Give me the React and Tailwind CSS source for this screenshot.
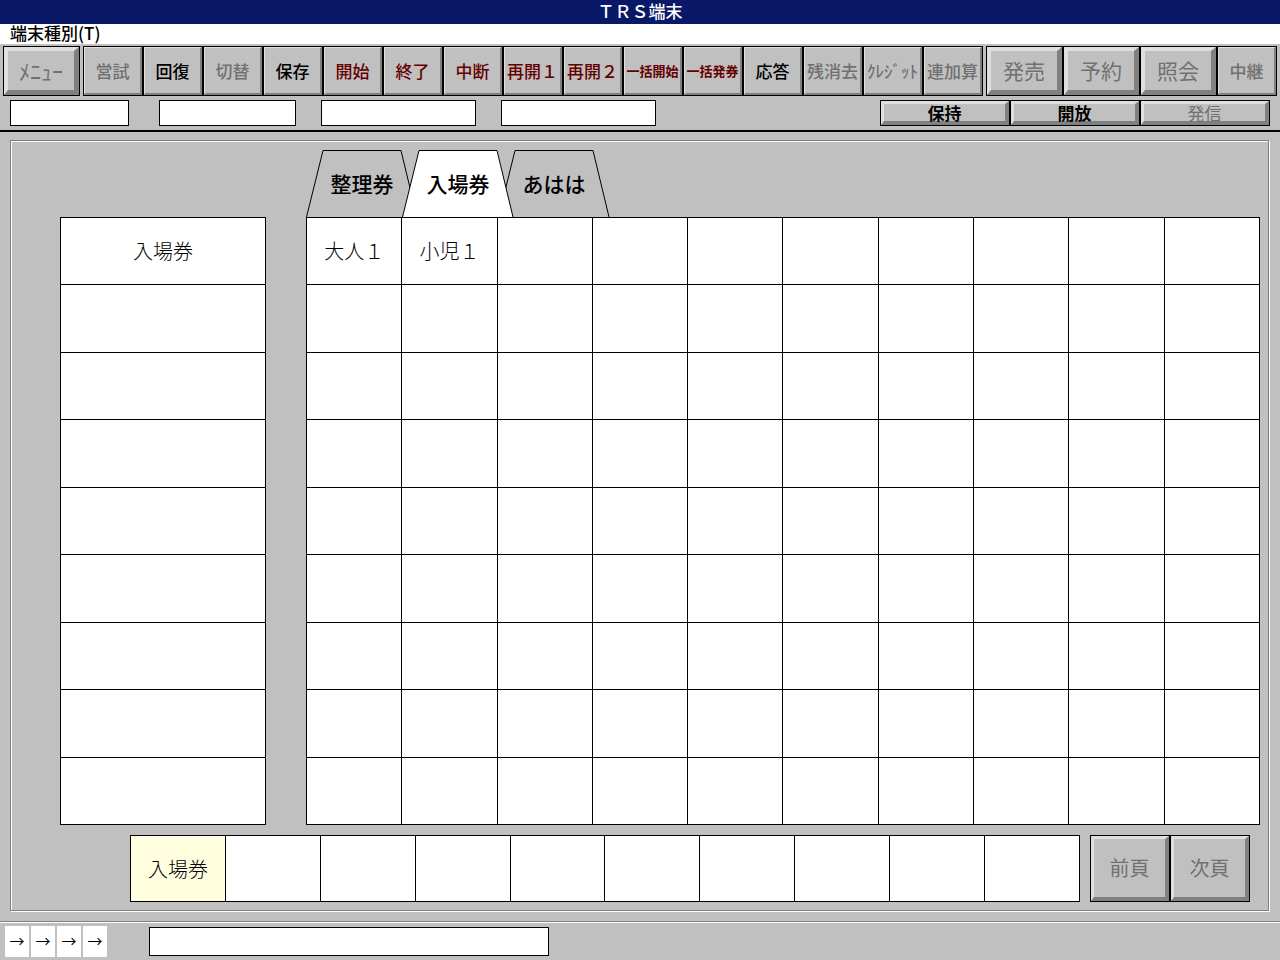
import React from "react";

const GRAY = "text-[#707070]";
const RED = "text-[#640000]";
const BLACK = "text-black";

const tools = [
  { label: "営試", tone: GRAY, disabled: true },
  { label: "回復", tone: BLACK },
  { label: "切替", tone: GRAY, disabled: true },
  { label: "保存", tone: BLACK },
  { label: "開始", tone: RED },
  { label: "終了", tone: RED },
  { label: "中断", tone: RED },
  { label: "再開１", tone: RED },
  { label: "再開２", tone: RED },
  { label: "一括開始", tone: RED, size: "text-[13px] font-bold" },
  { label: "一括発券", tone: RED, size: "text-[13px] font-bold" },
  { label: "応答", tone: BLACK },
  { label: "残消去", tone: GRAY, disabled: true },
  { label: "ｸﾚｼﾞｯﾄ", tone: GRAY, disabled: true },
  { label: "連加算", tone: GRAY, disabled: true },
];

const COLUMNS = 10;
const ROWS = 9;
const cells = [["大人１", "小児１"]];
const tabs = ["整理券", "入場券", "あはは"];

function FlatButton({ label, tone, size = "text-[17px] font-medium", disabled }) {
  return (
    <button
      type="button"
      disabled={disabled}
      className="h-[50px] w-[60px] shrink-0 border border-black bg-[#c0c0c0]"
    >
      <span
        className={`flex h-full items-center justify-center whitespace-nowrap border-t border-l border-r-2 border-b-2 border-t-[#dfdfdf] border-l-[#dfdfdf] border-r-[#808080] border-b-[#808080] ${size} ${tone}`}
      >
        <span className="-mx-2">{label}</span>
      </span>
    </button>
  );
}

function RaisedButton({ label, frame, face = "border-t-4 border-l-4 border-r-[5px] border-b-[5px]", text, disabled }) {
  return (
    <button
      type="button"
      disabled={disabled}
      className={`shrink-0 border border-black bg-[#c0c0c0] ${frame}`}
    >
      <span
        className={`flex h-full items-center justify-center whitespace-nowrap border-t-[#dfdfdf] border-l-[#dfdfdf] border-r-[#808080] border-b-[#808080] ${face} ${text}`}
      >
        {label}
      </span>
    </button>
  );
}

function Field({ label, className }) {
  return (
    <input
      type="text"
      aria-label={label}
      className={`border border-black bg-white px-1 text-[17px] outline-none ${className}`}
    />
  );
}

function Tab({ label, active }) {
  return (
    <button
      type="button"
      role="tab"
      aria-selected={active}
      className={`relative -mr-4 h-[67px] w-28 shrink-0 text-[21px] font-medium ${active ? "z-10" : ""}`}
    >
      <svg
        aria-hidden="true"
        viewBox="0 0 112 67"
        className="absolute inset-0 h-full w-full"
      >
        <path
          d="M0.5 67 L17 0.5 H95 L111 67"
          fill={active ? "#ffffff" : "#c0c0c0"}
          stroke="#000000"
          strokeWidth="1"
        />
      </svg>
      <span className="relative">{label}</span>
    </button>
  );
}

const cellClass = "border border-black p-0 text-center";

export default function App() {
  return (
    <div
      className="flex min-h-screen flex-col bg-[#c0c0c0] text-black"
      style={{ fontFamily: '"Noto Sans CJK JP", "Liberation Sans", sans-serif' }}
    >
      <header className="h-6 bg-[#0a1868] text-center text-white">
        <h1 className="text-[17px] leading-[22px] font-medium">ＴＲＳ端末</h1>
      </header>
      <nav className="flex h-5 items-start bg-white px-[10px]">
        <button type="button" className="text-[17px] leading-[18px] font-medium">
          端末種別(T)
        </button>
      </nav>

      <div className="flex px-[3px] pt-[2px]">
        <RaisedButton label="ﾒﾆｭｰ" frame="mr-[3px] h-[50px] w-[77px]" text="text-[22px] text-[#707070]" disabled />
        {tools.map((t) => (
          <FlatButton key={t.label} {...t} />
        ))}
        <div className="ml-auto flex">
          {["発売", "予約", "照会"].map((label) => (
            <RaisedButton key={label} label={label} frame="h-[50px] w-[77px]" text="text-[21px] text-[#707070]" disabled />
          ))}
          <FlatButton label="中継" tone={GRAY} disabled />
        </div>
      </div>

      <div className="flex h-9 border-b-2 border-black px-[10px] pt-1">
        <Field label="入力欄1" className="h-[26px] w-[119px]" />
        <Field label="入力欄2" className="ml-[30px] h-[26px] w-[137px]" />
        <Field label="入力欄3" className="ml-[25px] h-[26px] w-[155px]" />
        <Field label="入力欄4" className="ml-[25px] h-[26px] w-[155px]" />
        <div className="ml-auto flex">
          {["保持", "開放", "発信"].map((label) => (
            <RaisedButton
              key={label}
              label={label}
              frame="h-[26px] w-[130px]"
              face="border-t-[3px] border-l-[3px] border-r-4 border-b-4"
              text={
                label === "発信"
                  ? "text-[17px] leading-4 text-[#707070]"
                  : "text-[17px] leading-4 font-bold text-black"
              }
              disabled={label === "発信"}
            />
          ))}
        </div>
      </div>

      <main className="mt-2 mr-[11px] mb-[10px] ml-[10px] flex flex-1 flex-col border border-[#808080] pt-[9px] pb-2 shadow-[inset_1px_1px_0_#fff,1px_1px_0_#fff]">
        <div className="flex flex-1 gap-10 pr-2 pl-[49px]">
          <table className="mt-[67px] w-[206px] shrink-0 table-fixed border-collapse bg-white text-xl font-light">
            <tbody>
              {Array.from({ length: ROWS }, (_, r) => (
                <tr key={r} className="h-[67px]">
                  <td className={cellClass}>{r === 0 ? "入場券" : ""}</td>
                </tr>
              ))}
            </tbody>
          </table>
          <div className="flex min-w-0 flex-1 flex-col">
            <div role="tablist" className="flex">
              {tabs.map((t, i) => (
                <Tab key={t} label={t} active={i === 1} />
              ))}
            </div>
            <table className="w-full flex-1 table-fixed border-collapse bg-white text-xl font-light">
              <tbody>
                {Array.from({ length: ROWS }, (_, r) => (
                  <tr key={r} className="h-[67px]">
                    {Array.from({ length: COLUMNS }, (_, c) => (
                      <td key={c} className={cellClass}>
                        {cells[r]?.[c] ?? ""}
                      </td>
                    ))}
                  </tr>
                ))}
              </tbody>
            </table>
          </div>
        </div>

        <div className="mt-[10px] flex h-[67px] pr-[18px] pl-[119px]">
          <div className="min-w-0 flex-1">
            <table className="w-full table-fixed border-collapse bg-white text-xl font-light">
              <tbody>
                <tr className="h-[66px]">
                  {Array.from({ length: COLUMNS }, (_, c) => (
                    <td key={c} className={`${cellClass} ${c === 0 ? "bg-[#ffffe0]" : ""}`}>
                      {c === 0 ? "入場券" : ""}
                    </td>
                  ))}
                </tr>
              </tbody>
            </table>
          </div>
          <div className="ml-[10px] flex">
            {["前頁", "次頁"].map((label) => (
              <RaisedButton
                key={label}
                label={label}
                frame="h-[67px] w-20"
                face="border-t-[3px] border-l-[3px] border-r-4 border-b-4"
                text="text-xl text-[#707070]"
                disabled
              />
            ))}
          </div>
        </div>
      </main>

      <footer className="flex h-[39px] border-t border-[#808080] pl-[5px] shadow-[inset_0_1px_0_#fff]">
        <div className="mt-1 flex h-[31px] gap-[2px]">
          {[0, 1, 2, 3].map((i) => (
            <span key={i} className="flex w-6 items-center justify-center bg-white text-[15px]">
              →
            </span>
          ))}
        </div>
        <Field label="メッセージ" className="mt-[5px] ml-[42px] h-[29px] w-[400px]" />
      </footer>
    </div>
  );
}
